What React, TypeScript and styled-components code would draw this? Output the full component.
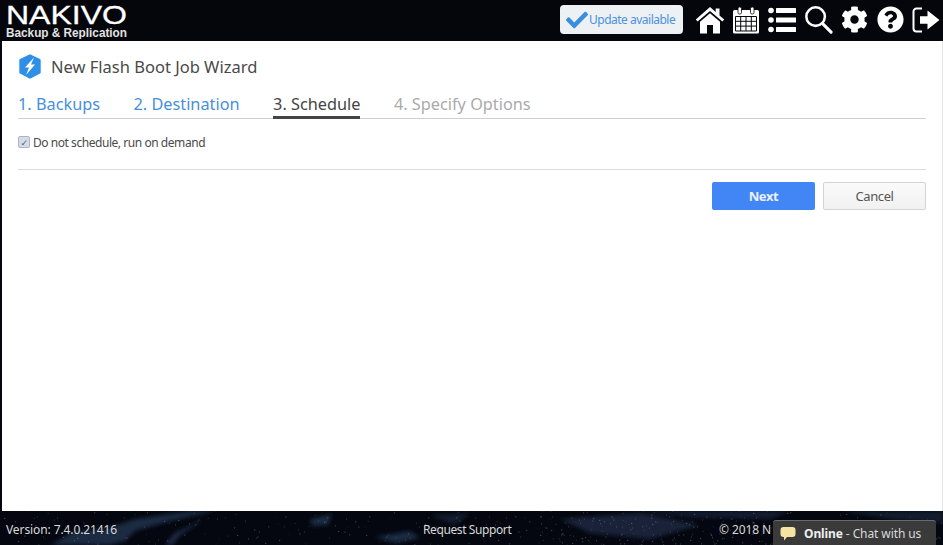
import React from 'react';
import styled, { createGlobalStyle } from 'styled-components';
import { FaCheck, FaCog, FaQuestionCircle } from 'react-icons/fa';

const GlobalStyle = createGlobalStyle`
  html, body {
    margin: 0;
    padding: 0;
    height: 100%;
    overflow: hidden;
    background: #05060c;
    font-family: 'Noto Sans', 'DejaVu Sans', sans-serif;
  }
`;

const Page = styled.div`
  width: 943px;
  height: 545px;
  display: flex;
  flex-direction: column;
  position: relative;
  overflow: hidden;
`;

const Header = styled.header`
  height: 41px;
  display: flex;
  align-items: center;
  justify-content: space-between;
  padding: 0 1px 2px 6px;
  box-sizing: border-box;
  background: #05060c;
  flex: none;
`;

const Logo = styled.svg`
  display: block;
  font-family: 'Liberation Sans', sans-serif;
`;

const Tools = styled.div`
  display: flex;
  align-items: center;
  gap: 4px;
`;

const UpdateButton = styled.div`
  width: 123px;
  height: 29px;
  margin-right: 7px;
  border-radius: 4px;
  background: #eef1f4;
  color: #4a90e2;
  font-size: 12px;
  letter-spacing: -0.5px;
  display: flex;
  align-items: center;
  padding-left: 6px;
  gap: 1px;
  box-sizing: border-box;
`;

const ToolIcon = styled.div`
  width: 32px;
  height: 32px;
  display: flex;
  align-items: center;
  justify-content: center;
  color: #fff;
`;

const Content = styled.main`
  flex: 1;
  background: #fff;
  margin-left: 2px;
  padding: 0 16px;
  border-right: 1px solid #e4e4e4;
  display: flex;
  flex-direction: column;
  color: #444;
`;

const TitleRow = styled.div`
  height: 51px;
  display: flex;
  align-items: center;
  gap: 9px;
  flex: none;
`;

const Title = styled.h1`
  margin: 0;
  font-size: 16.5px;
  font-weight: 400;
  color: #4a4a4a;
`;

const Tabs = styled.nav`
  display: flex;
  gap: 33.5px;
  height: 26px;
  border-bottom: 1px solid #cfcfcf;
`;

const Tab = styled.div<{ $state: 'done' | 'active' | 'todo' }>`
  height: 24px;
  font-size: 16.3px;
  line-height: 24px;
  color: ${(p) => (p.$state === 'done' ? '#4590dd' : p.$state === 'active' ? '#444' : '#aaa')};
  border-bottom: ${(p) => (p.$state === 'active' ? '3px solid #444' : '0')};
`;

const CheckRow = styled.label`
  display: flex;
  align-items: center;
  gap: 3px;
  height: 16px;
  margin-top: 15px;
  font-size: 12px;
  color: #4a4a4a;
  letter-spacing: -0.45px;
`;

const CheckBox = styled.span`
  width: 10px;
  height: 10px;
  border: 1px solid #a9b4c4;
  background: #d5dce6;
  border-radius: 2px;
  display: flex;
  align-items: center;
  justify-content: center;
  color: #3d5f96;
  font-size: 9px;
  line-height: 1;
`;

const Divider = styled.hr`
  width: 100%;
  margin: 19px 0 0;
  border: 0;
  border-top: 1px solid #dcdcdc;
`;

const Actions = styled.div`
  display: flex;
  justify-content: flex-end;
  gap: 8px;
  margin-top: 12px;
`;

const ActionButton = styled.button<{ $primary?: boolean }>`
  width: 103px;
  height: 28px;
  padding: 0;
  border-radius: 2px;
  font-family: inherit;
  font-size: 13px;
  letter-spacing: -0.4px;
  font-weight: ${(p) => (p.$primary ? 700 : 400)};
  color: ${(p) => (p.$primary ? '#e8f0fe' : '#555')};
  background: ${(p) => (p.$primary ? '#4285f4' : 'linear-gradient(#fafafa, #f1f1f1)')};
  border: ${(p) => (p.$primary ? '0' : '1px solid #d4d4d4')};
`;

const Footer = styled.footer`
  height: 34px;
  flex: none;
  position: relative;
  display: grid;
  grid-template-columns: 417px 296px 1fr;
  align-items: center;
  padding: 2px 6px 0;
  box-sizing: border-box;
  background: #04070f;
  color: #d8d8d8;
  font-size: 12px;
`;

const FooterMap = styled.svg`
  position: absolute;
  inset: 0;
`;

const FooterText = styled.span<{ $tight?: boolean }>`
  position: relative;
  white-space: nowrap;
  letter-spacing: ${(p) => (p.$tight ? '-0.4px' : '-0.1px')};
`;

const ChatTab = styled.div`
  position: absolute;
  left: 773px;
  bottom: 0;
  width: 163px;
  height: 25px;
  display: flex;
  align-items: center;
  gap: 8px;
  padding-left: 7px;
  box-sizing: border-box;
  background: #3a3a3a;
  border-top: 1px solid #6a6a6a;
  border-radius: 3px 3px 0 0;
  color: #d9d9d9;
  font-size: 12px;
  letter-spacing: -0.1px;
  white-space: nowrap;
`;

const ChatStrong = styled.b`
  color: #eee;
`;

const BrandLogo = () => (
  <Logo width="122" height="39" viewBox="0 0 122 39">
    <text x="0" y="24" fontSize="26" fill="#fff" stroke="#fff" strokeWidth="0.3" textLength="121" lengthAdjust="spacingAndGlyphs">
      NAKIVO
    </text>
    <text x="0" y="36.5" fontSize="12" fontWeight="700" fill="#e2e2e2" textLength="121" lengthAdjust="spacingAndGlyphs">
      Backup &amp; Replication
    </text>
  </Logo>
);

const HomeIcon = () => (
  <svg width="30" height="28" viewBox="0 0 30 28" fill="#fff">
    <path d="M15 1 0.8 13.5 2.6 15.6 15 4.9 27.4 15.6 29.2 13.5 24.5 9.4V2.5H20.7V6Z" />
    <path d="M15 7.2 5 15.8V27.5H12V19H18V27.5H25V15.8Z" />
  </svg>
);

const CalendarIcon = () => (
  <svg width="28" height="28" viewBox="0 0 28 28" fill="none">
    <rect x="1" y="4" width="26" height="23.5" rx="1.5" fill="#fff" />
    <rect x="6" y="1" width="3.5" height="7" rx="1.5" fill="#fff" stroke="#05060c" strokeWidth="0.8" />
    <rect x="18.5" y="1" width="3.5" height="7" rx="1.5" fill="#fff" stroke="#05060c" strokeWidth="0.8" />
    <path d="M3.5 10.5H24.5V25H3.5ZM3.5 15.3H24.5M3.5 20.1H24.5M8.7 10.5V25M14 10.5V25M19.3 10.5V25" stroke="#05060c" strokeWidth="1" />
  </svg>
);

const ListIcon = () => (
  <svg width="28" height="26" viewBox="0 0 28 26" fill="#fff">
    <circle cx="3" cy="3.5" r="2.8" />
    <circle cx="3" cy="13" r="2.8" />
    <circle cx="3" cy="22.5" r="2.8" />
    <rect x="8" y="1" width="20" height="5" rx="0.5" />
    <rect x="8" y="10.5" width="20" height="5" rx="0.5" />
    <rect x="8" y="20" width="20" height="5" rx="0.5" />
  </svg>
);

const SearchIcon = () => (
  <svg width="29" height="29" viewBox="0 0 30 30" fill="none" stroke="#fff">
    <circle cx="12" cy="12" r="9.6" strokeWidth="2.6" />
    <path d="M19 19 28 28" strokeWidth="3.2" strokeLinecap="round" />
  </svg>
);

const ExitIcon = () => (
  <svg width="28" height="28" viewBox="0 0 28 28" fill="#fff">
    <path d="M10 2.5H4.5A3 3 0 0 0 1.5 5.5V22.5A3 3 0 0 0 4.5 25.5H10" fill="none" stroke="#fff" strokeWidth="2" />
    <path d="M8 10.2H15.5V4.5L27.5 14 15.5 23.5V17.8H8Z" />
  </svg>
);

const FlashIcon = () => (
  <svg width="24" height="25" viewBox="0 0 24 25">
    <path d="M12 1.5 21.5 6V18.5L12 23.5 2.5 18.5V6Z" fill="#2f8fe8" stroke="#2f8fe8" strokeWidth="2.4" strokeLinejoin="round" />
    <path d="M16 3.5 7 13.5H11L8 21 17 10.5H13Z" fill="#fff" />
  </svg>
);

const ChatBubble = () => (
  <svg width="16" height="15" viewBox="0 0 16 15">
    <path d="M3.5 1H12.5Q15.5 1 15.5 4V8Q15.5 11 12.5 11H7L4 14.5V11H3.5Q0.5 11 0.5 8V4Q0.5 1 3.5 1Z" fill="#f6e3a1" />
  </svg>
);

// city lights, thicker along the coasts on the right half of the strip
const lights = Array.from({ length: 420 }, (_, i) => {
  const spread = (i * 197.3) % 943;
  const x = i % 3 === 0 ? 540 + (spread % 240) : spread;
  return {
    x,
    y: (i * i * 7.1 + i * 3.7) % 34,
    o: 0.12 + ((i * 13) % 10) / 26,
  };
});

const FooterBackdrop = () => (
  <FooterMap width="943" height="34" viewBox="0 0 943 34">
    <defs>
      <filter id="soft">
        <feGaussianBlur stdDeviation="2" />
      </filter>
    </defs>
    <g filter="url(#soft)" fill="#22324f">
      <path d="M50 34 75 20 105 18 135 8 190 0H215L170 10 135 20 125 30 110 34Z" opacity="0.8" />
      <path d="M165 34 175 22 205 8 180 24 172 34Z" opacity="0.9" />
      <path d="M310 8 332 3 328 14 312 15Z" opacity="0.8" />
      <path d="M375 26 410 20 420 27 395 32Z" opacity="0.8" />
      <path d="M430 4 470 2 455 14Z" opacity="0.5" />
      <path d="M560 8 640 2 700 14 650 28 590 22Z" opacity="0.65" />
      <path d="M640 0H790L770 8 690 6Z" opacity="0.55" />
      <path d="M840 0H943V12L890 8Z" opacity="0.5" />
    </g>
    {lights.map((l, i) => (
      <circle key={i} cx={l.x} cy={l.y} r="0.6" fill="#aebbd0" opacity={l.o} />
    ))}
  </FooterMap>
);

export default function App() {
  return (
    <Page>
      <GlobalStyle />
      <Header>
        <BrandLogo />
        <Tools>
          <UpdateButton>
            <FaCheck size={22} color="#3b8de0" />
            Update available
          </UpdateButton>
          <ToolIcon><HomeIcon /></ToolIcon>
          <ToolIcon><CalendarIcon /></ToolIcon>
          <ToolIcon><ListIcon /></ToolIcon>
          <ToolIcon><SearchIcon /></ToolIcon>
          <ToolIcon><FaCog size={27} /></ToolIcon>
          <ToolIcon><FaQuestionCircle size={27} /></ToolIcon>
          <ToolIcon><ExitIcon /></ToolIcon>
        </Tools>
      </Header>
      <Content>
        <TitleRow>
          <FlashIcon />
          <Title>New Flash Boot Job Wizard</Title>
        </TitleRow>
        <Tabs>
          <Tab $state="done">1. Backups</Tab>
          <Tab $state="done">2. Destination</Tab>
          <Tab $state="active">3. Schedule</Tab>
          <Tab $state="todo">4. Specify Options</Tab>
        </Tabs>
        <CheckRow>
          <CheckBox>✓</CheckBox>
          Do not schedule, run on demand
        </CheckRow>
        <Divider />
        <Actions>
          <ActionButton $primary>Next</ActionButton>
          <ActionButton>Cancel</ActionButton>
        </Actions>
      </Content>
      <Footer>
        <FooterBackdrop />
        <FooterText>Version: 7.4.0.21416</FooterText>
        <FooterText $tight>Request Support</FooterText>
        <FooterText>© 2018 N</FooterText>
        <ChatTab>
          <ChatBubble />
          <span><ChatStrong>Online</ChatStrong> - Chat with us</span>
        </ChatTab>
      </Footer>
    </Page>
  );
}
